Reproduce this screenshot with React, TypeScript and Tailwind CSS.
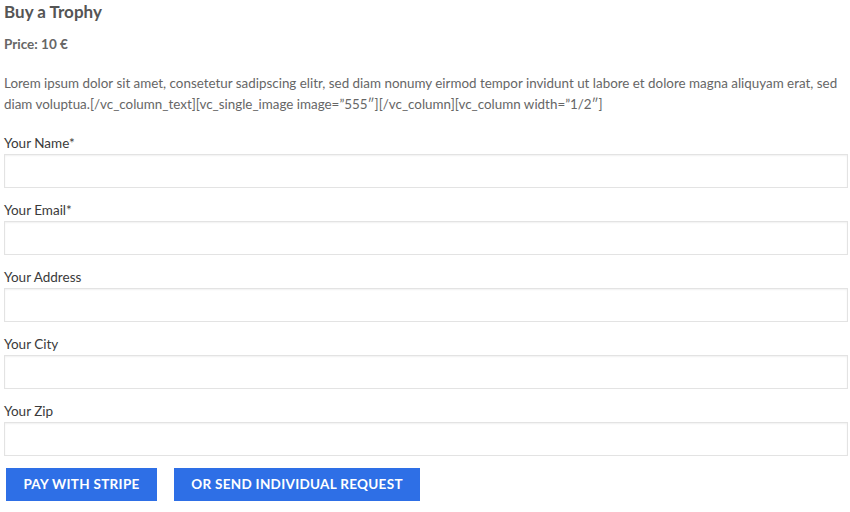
import { FC } from 'react';

const fields = [
  { label: 'Your Name', required: true },
  { label: 'Your Email', required: true },
  { label: 'Your Address', required: false },
  { label: 'Your City', required: false },
  { label: 'Your Zip', required: false },
];

const Field: FC<{ label: string; required: boolean }> = ({ label, required }) => (
  <div className="mb-[13px]">
    <label className="block text-[13.5px] leading-[18px] text-[#3a3a3a] mb-[2px]">
      {label}
      {required && '*'}
    </label>
    <input
      type="text"
      className="block w-full h-[34px] bg-white border border-[#e3e3e3] shadow-[inset_0_1px_2px_rgba(0,0,0,0.06)] outline-none"
    />
  </div>
);

export default function App() {
  return (
    <div className="w-[850px] h-[512px] bg-white pl-[4px] pr-[2px] font-['Lato','Open_Sans',sans-serif] overflow-hidden">
      <h2 className="text-[17px] leading-[24px] font-bold text-[#555]">Buy a Trophy</h2>
      <p className="text-[13.5px] leading-[18px] font-bold text-[#666] mt-[11px]">Price: 10 €</p>
      <p className="text-[13.4px] leading-[21px] text-[#666] mt-[20px] mb-[19px]">
        Lorem ipsum dolor sit amet, consetetur sadipscing elitr, sed diam nonumy eirmod tempor invidunt ut labore et dolore magna aliquyam erat, sed diam voluptua.[/vc_column_text][vc_single_image image=”555″][/vc_column][vc_column width=”1/2″]
      </p>
      <form>
        {fields.map((f) => (
          <Field key={f.label} label={f.label} required={f.required} />
        ))}
        <div className="flex gap-[17px] pl-[2px] -mt-[1px]">
          <button type="button" className="h-[33px] w-[151px] bg-[#2e6fe6] text-white text-[13.5px] font-bold tracking-[0.3px]">
            PAY WITH STRIPE
          </button>
          <button type="button" className="h-[33px] w-[246px] bg-[#2e6fe6] text-white text-[13.5px] font-bold tracking-[0.3px]">
            OR SEND INDIVIDUAL REQUEST
          </button>
        </div>
      </form>
    </div>
  );
}
